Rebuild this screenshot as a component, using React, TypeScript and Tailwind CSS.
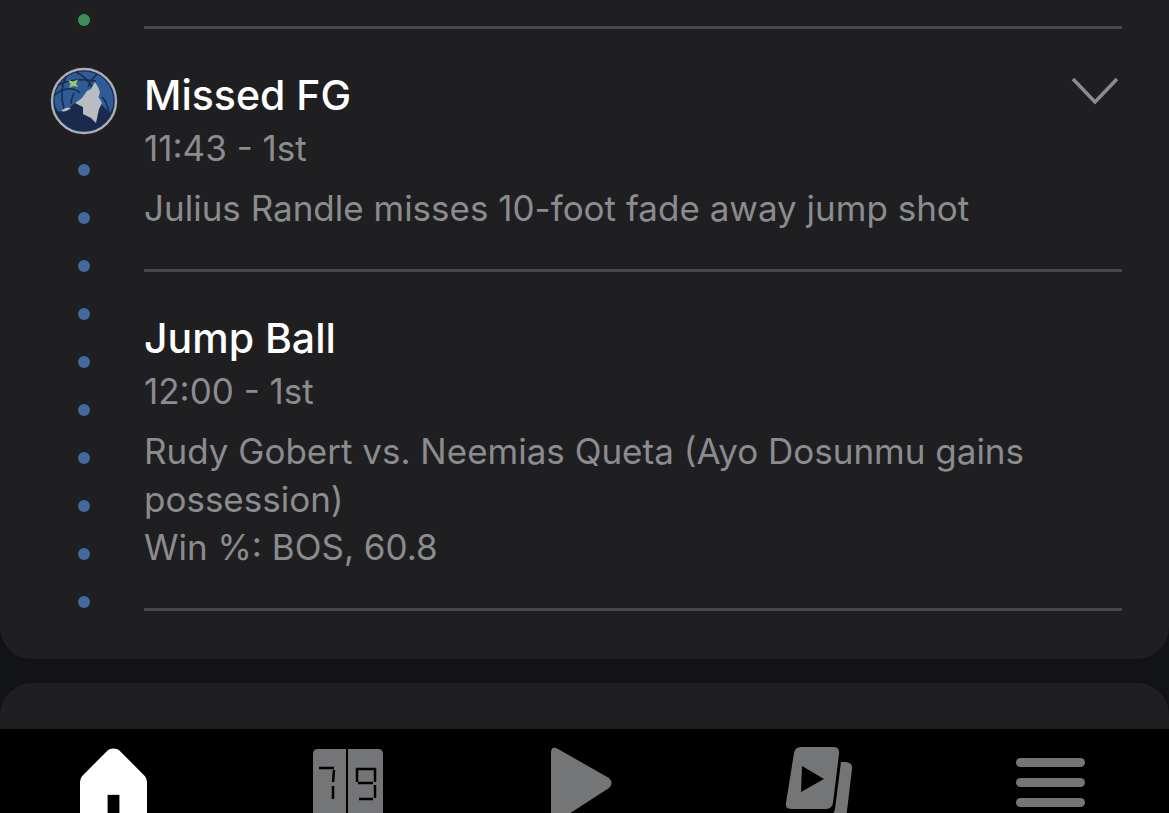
import React from "react";

function Dot({ green }: { green?: boolean }) {
  return <div className={green ? "w-3 h-3 rounded-full bg-[#3f8f55] shrink-0" : "w-3 h-3 rounded-full bg-[#43699f] shrink-0"} />;
}

function Wolves() {
  return (
    <svg width="68" height="68" viewBox="0 0 68 68" className="shrink-0">
      <circle cx="34" cy="34" r="32" fill="#1a2a4c" stroke="#a9afb6" strokeWidth="2.4" />
      <path d="M4.5 34 C4.5 17 18 4.5 34 4.5 C50 4.5 63.5 17 63.5 34 C63.5 38 62.5 42 60 46 L52 38 L46 33 L30 32 L20 40 L9 45 Q4.5 40 4.5 34 Z" fill="#2f5c96" />
      <g fill="none" stroke="#1a2a4c" strokeWidth="1.6">
        <path d="M5 28 C14 20 24 20 30 26" />
        <path d="M16 9 C11 20 11 32 14 42" />
        <path d="M26 5 C34 9 38 13 42 20" />
        <path d="M47 7 C43 11 40 15 38 20" />
        <path d="M8 18 C20 12 34 12 46 14" />
        <path d="M52 30 C56 34 58 40 59 46" />
        <path d="M24 26 C22 30 21 33 21 37" />
      </g>
      <path d="M18 13 L23 14.5 L28 12.5 L26 17 L28.5 20 L23.5 19 L19 21 L20.5 17 Z" fill="#9cc763" />
      <path d="M45 15 L48 20 L50 25 L48.5 30 L52 36 L49 42 L46 56 L41 51 L33 47 L33 40 L25 36 L32 31 L37 24 L41 22 Z" fill="#b9bdc1" />
      <path d="M11 44 C15 40 19 40 21 41 C18 44 14 45 11 44 Z" fill="#b9bdc1" />
    </svg>
  );
}

function Entry({ title, time, lines }: { title: string; time: string; lines: string[] }) {
  return (
    <div className="pt-[42px]">
      <div className="text-[41px] leading-[48px] font-medium text-white">{title}</div>
      <div className="text-[35px] leading-[48px] mt-[5px] text-[#8b8c8f]">{time}</div>
      <div className="text-[35px] leading-[48px] mt-3 text-[#8b8c8f]">
        {lines.map((l) => (
          <div key={l}>{l}</div>
        ))}
      </div>
    </div>
  );
}

export default function App() {
  return (
    <div className="w-[1169px] h-[813px] overflow-hidden bg-[#121315] flex flex-col font-['Inter',sans-serif]">
      <div className="h-[659px] shrink-0 bg-[#1f1f21] rounded-b-[32px] flex">
        <div className="w-[144px] shrink-0">
          <div className="w-[168px] flex flex-col items-center pt-[14px]">
            <Dot green />
            <div className="mt-[41px]"><Wolves /></div>
            <div className="flex flex-col items-center gap-9 mt-[29px]">
              {Array.from({ length: 10 }).map((_, i) => (
                <Dot key={i} />
              ))}
            </div>
          </div>
        </div>
        <div className="flex-1 mr-[47px] pt-[26px]">
          <div className="relative border-t-[3px] border-b-[3px] border-[#47484a] h-[246px]">
            <Entry
              title="Missed FG"
              time="11:43 - 1st"
              lines={["Julius Randle misses 10-foot fade away jump shot"]}
            />
            <svg className="absolute right-[3px] top-[48px]" width="48" height="28" viewBox="0 0 48 28" fill="none">
              <path d="M2 2 L24 25 L46 2" stroke="#8b8c8f" strokeWidth="3.5" />
            </svg>
          </div>
          <div className="border-b-[3px] border-[#47484a] h-[339px]">
            <Entry
              title="Jump Ball"
              time="12:00 - 1st"
              lines={["Rudy Gobert vs. Neemias Queta (Ayo Dosunmu gains", "possession)", "Win %: BOS, 60.8"]}
            />
          </div>
        </div>
      </div>
      <div className="h-[46px] mt-6 shrink-0 bg-[#1f1f21] rounded-t-[32px]" />
      <div className="flex-1 bg-black flex pl-[80px] pt-5 overflow-hidden">
        <svg width="67" height="70" viewBox="0 0 68 70" className="shrink-0 overflow-visible">
          <path d="M34 -1 Q30 -1 28 1 L3 26 Q0 29 0 34 L0 70 L68 70 L68 34 Q68 29 65 26 L40 1 Q38 -1 34 -1 Z" fill="#fff" />
          <rect x="28" y="46" width="12" height="24" fill="#000" />
        </svg>
        <svg width="70" height="70" viewBox="0 0 70 70" className="shrink-0 ml-[166px]">
          <path d="M5 0 H33 V70 H0 V5 Q0 0 5 0 Z M35 0 H65 Q70 0 70 5 V70 H35 Z" fill="#747577" />
          <path d="M6 19 H21 M21 21 L20 33 M20 37 V50" stroke="#000" strokeWidth="2.5" fill="none" />
          <path d="M44 33 V20 H62 V33 M45 34 H60 M62 36 V49 M46 50 H60" stroke="#000" strokeWidth="2.5" fill="none" />
        </svg>
        <svg width="62" height="70" viewBox="0 0 62 70" className="shrink-0 ml-[168px] overflow-visible">
          <path d="M0 4 Q0 -4 7 0 L58 29 Q63 34 58 39 L7 72 Q0 76 0 68 Z" fill="#747577" />
        </svg>
        <svg width="66" height="70" viewBox="0 0 66 70" className="shrink-0 ml-[173px] overflow-visible">
          <path d="M55 13 L60 13 Q67 14 66 20 L60 70 L44 70 Q48 64 49 60 Z" fill="#747577" />
          <path d="M15 -2 H47 Q54 -2 53 5 L47 54 Q46 60 39 60 H6 Q-1 60 0 54 L8 4 Q9 -2 15 -2 Z" fill="#747577" />
          <path d="M16 17 L38 30 L15 43 Z" fill="#000" />
        </svg>
        <div className="w-[69px] shrink-0 ml-[164px] flex flex-col gap-[11px] pt-[9px]">
          <div className="h-[9px] rounded-full bg-[#747577]" />
          <div className="h-[9px] rounded-full bg-[#747577]" />
          <div className="h-[9px] rounded-full bg-[#747577]" />
        </div>
      </div>
    </div>
  );
}
